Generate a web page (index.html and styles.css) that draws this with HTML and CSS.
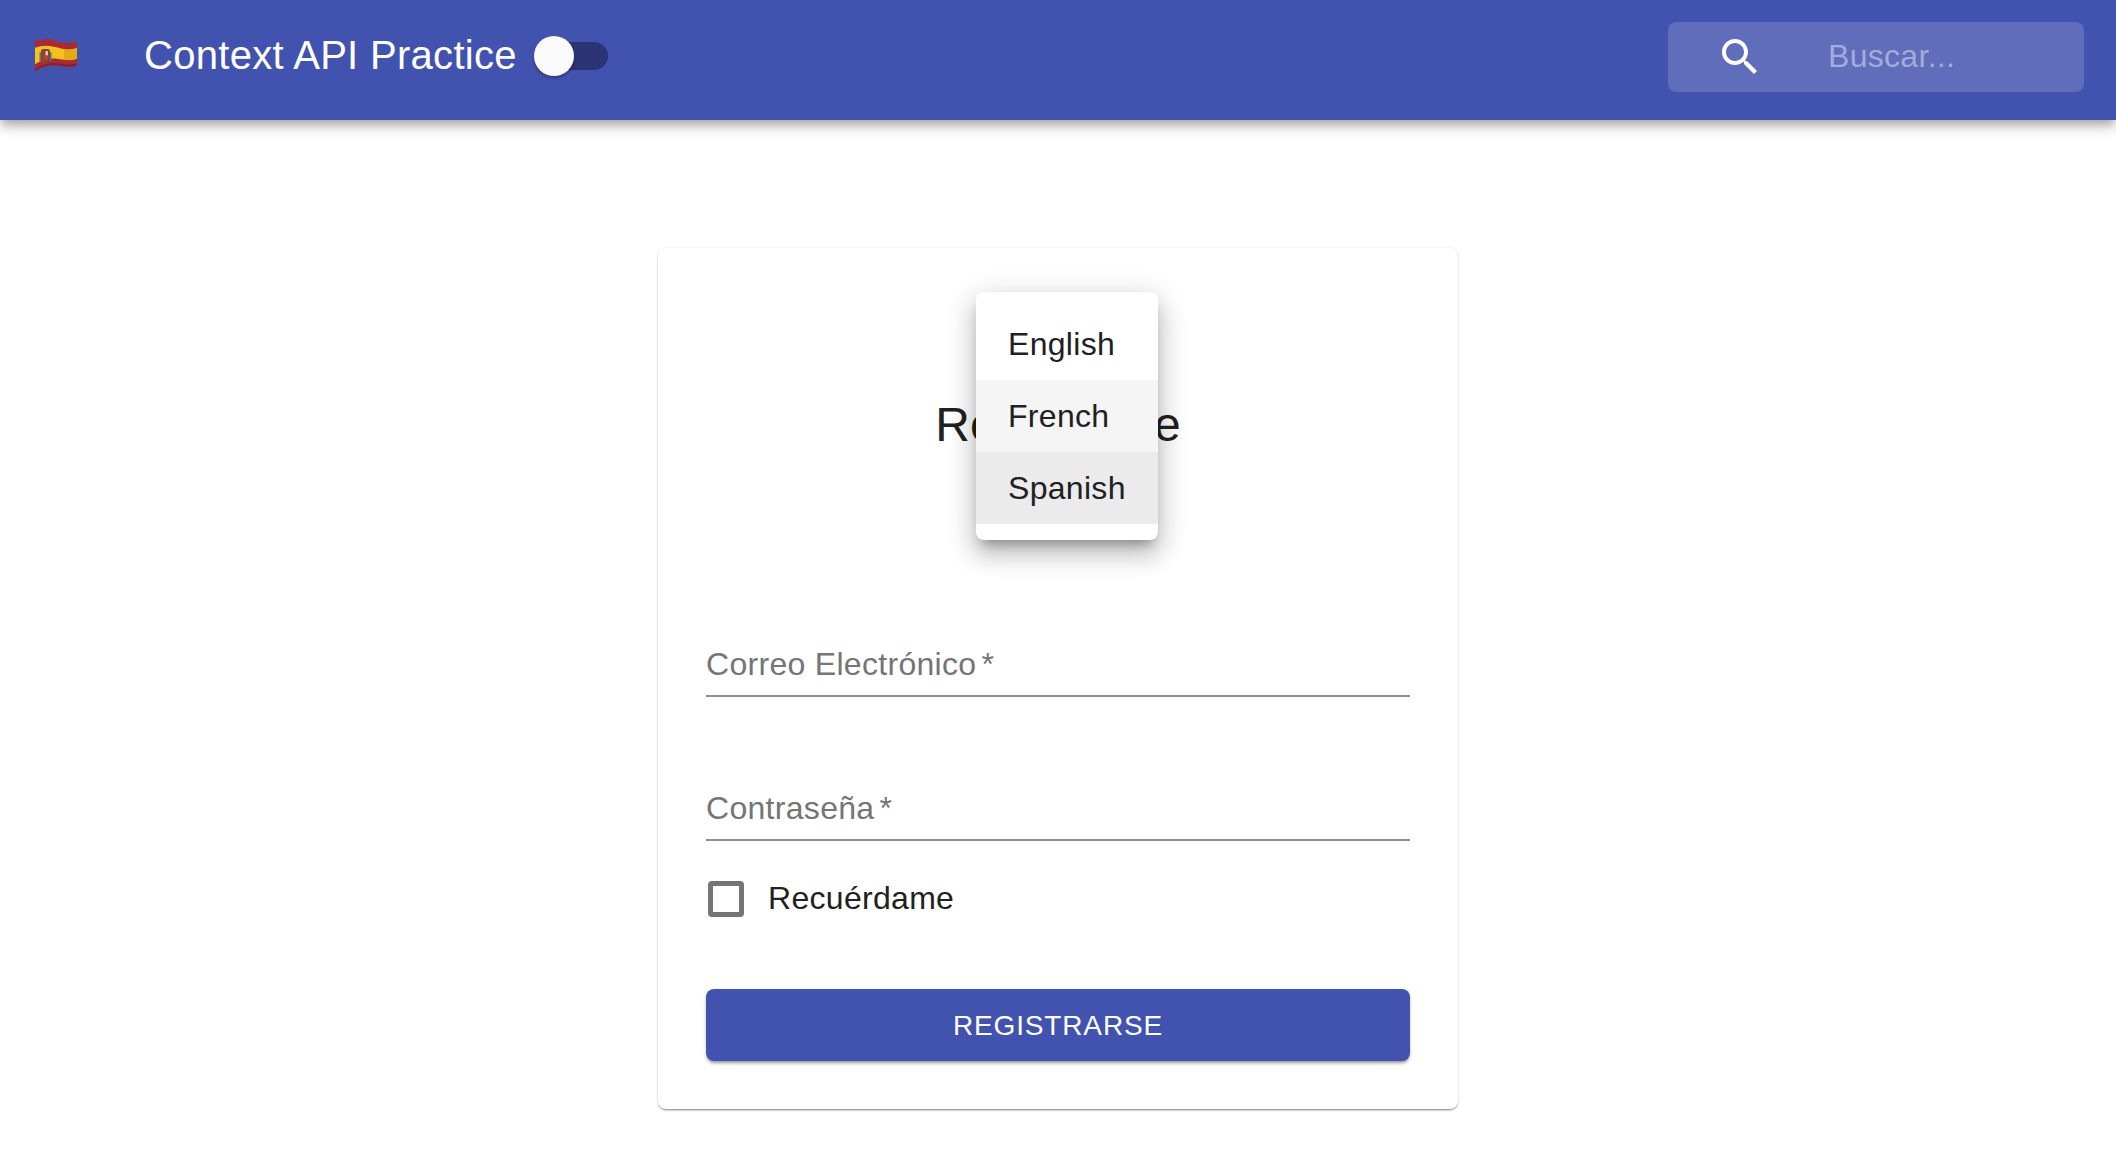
FILE: index.html
```html
<!DOCTYPE html>
<html lang="es">

<head>
    <meta charset="UTF-8">
    <meta name="viewport" content="width=device-width, initial-scale=1.0">
    <title>Context API Practice</title>
    <link rel="stylesheet" href="styles.css">
</head>

<body>

    <!-- Barra superior -->
    <header class="app-bar">
        <svg class="flag" viewBox="0 1 44 31" preserveAspectRatio="none" aria-label="Spanish flag">
            <path d="M1 4C7 2 13 1 20 3S35 7 43 4V26C35 28 30 27 23 26S8 27 1 31Z" fill="#a92a35" />
            <path d="M1 31C8 27 16 25.500 23 26S35 28 43 26V24C35 26 30 25 23 24S8 25 1 29Z" fill="#8a1f2c" />
            <path d="M1 10C7 8 13 7.500 20 9S35 13 43 10V20C35 22 30 21 23 20S8 21 1 25Z" fill="#f3c21d" />
            <path d="M30 11.500C34 12.500 38 12 43 10V20C38 21.500 34 21.500 30 20.800Z" fill="#e3ab14" />
            <rect x="7" y="11" width="9" height="12" rx="2" fill="#7d4a2b" />
            <rect x="9" y="13" width="2.500" height="4" fill="#b5303a" />
            <rect x="11.500" y="13" width="2.500" height="4" fill="#d8d2c4" />
            <rect x="9" y="17" width="5" height="4" fill="#c0392f" />
            <rect x="5.500" y="14" width="1.500" height="8" fill="#5d6f8a" />
            <rect x="16" y="14" width="1.500" height="8" fill="#5d6f8a" />
        </svg>
        <span class="app-title">Context API Practice</span>
        <div class="switch">
            <span class="switch-track"></span>
            <span class="switch-thumb"></span>
        </div>
        <div class="search">
            <svg class="search-icon" viewBox="0 0 24 24">
                <path d="M15.5 14h-.79l-.28-.27C15.41 12.59 16 11.11 16 9.5 16 5.91 13.09 3 9.5 3S3 5.91 3 9.5 5.91 16 9.5 16c1.61 0 3.09-.59 4.230-1.570l.27.28v.79l5 4.990L20.490 19l-4.990-5zm-6 0C7.010 14 5 11.990 5 9.500S7.010 5 9.500 5 14 7.010 14 9.500 11.990 14 9.500 14z" />
            </svg>
            <input class="search-input" type="text" placeholder="Buscar...">
        </div>
    </header>

    <main class="page">
        <div class="card">
            <h1 class="card-title">Registrarse</h1>

            <!-- Menú de idioma abierto -->
            <ul class="menu">
                <li class="menu-item">English</li>
                <li class="menu-item hover">French</li>
                <li class="menu-item selected">Spanish</li>
            </ul>

            <form class="form">
                <div class="field first">
                    <label class="field-label">Correo Electrónico<span class="required">*</span></label>
                </div>
                <div class="field">
                    <label class="field-label">Contraseña<span class="required">*</span></label>
                </div>
                <label class="remember">
                    <input class="remember-box" type="checkbox">
                    <span class="remember-text">Recuérdame</span>
                </label>
                <button class="submit" type="button">Registrarse</button>
            </form>
        </div>
    </main>

</body>

</html>
```

FILE: styles.css
```css
* {
    box-sizing: border-box;
}

body {
    font-family: "Liberation Sans", Arial, sans-serif;
    background-color: white;
    color: #212121;
    margin: 0;
    min-height: 100vh;
    letter-spacing: 0.3px;
}

.app-bar {
    display: flex;
    align-items: center;
    height: 120px;
    padding: 0 32px 6px 34px;
    background-color: #4252af;
    box-shadow: 0 4px 8px -2px rgba(0, 0, 0, 0.2), 0 8px 10px 0 rgba(0, 0, 0, 0.14), 0 2px 20px 0 rgba(0, 0, 0, 0.12);
    color: white;
}

.flag {
    width: 44px;
    height: 34px;
    margin-bottom: 4px;
}

.app-title {
    margin-left: 66px;
    margin-bottom: 4px;
    font-size: 40px;
    line-height: 48px;
}

.switch {
    position: relative;
    width: 74px;
    height: 40px;
    margin-left: 17px;
    margin-bottom: 2px;
}

.switch-track {
    position: absolute;
    top: 6px;
    left: 6px;
    width: 68px;
    height: 28px;
    border-radius: 14px;
    background-color: #2d3476;
}

.switch-thumb {
    position: absolute;
    top: 0;
    left: 0;
    width: 40px;
    height: 40px;
    border-radius: 50%;
    background-color: #fafafa;
    box-shadow: 0 2px 3px rgba(0, 0, 0, 0.3);
}

.search {
    display: flex;
    align-items: center;
    width: 416px;
    height: 70px;
    margin-left: auto;
    padding-left: 48px;
    border-radius: 8px;
    background-color: #5f6dbb;
}

.search-icon {
    width: 48px;
    height: 48px;
    fill: white;
}

.search-input {
    flex: 1;
    min-width: 0;
    margin-left: 64px;
    margin-bottom: 2px;
    padding: 0;
    border: none;
    outline: none;
    background: none;
    color: white;
    font-family: inherit;
    font-size: 32px;
    letter-spacing: 0.3px;
}

.search-input::placeholder {
    color: #a3abd9;
    opacity: 1;
}

.page {
    display: flex;
    justify-content: center;
    padding-top: 128px;
}

.card {
    position: relative;
    width: 800px;
    padding: 48px;
    border-radius: 8px;
    background-color: white;
    box-shadow: 0 2px 2px -1px rgba(0, 0, 0, 0.4), 0 1px 3px 0 rgba(0, 0, 0, 0.12), 0 0 2px 0 rgba(0, 0, 0, 0.08);
}

.card-title {
    margin: 97px 0 0;
    font-size: 48px;
    font-weight: normal;
    line-height: 64px;
    letter-spacing: 0;
    text-align: center;
}

.menu {
    position: absolute;
    top: 44px;
    left: 318px;
    width: 182px;
    margin: 0;
    padding: 16px 0;
    border-radius: 8px;
    background-color: white;
    box-shadow: 0 10px 12px -6px rgba(0, 0, 0, 0.3), 0 16px 24px 2px rgba(0, 0, 0, 0.14), 0 6px 30px 5px rgba(0, 0, 0, 0.12);
    list-style: none;
}

.menu-item {
    height: 72px;
    padding: 0 32px;
    font-size: 32px;
    line-height: 72px;
}

.menu-item.hover {
    background-color: #f5f5f5;
}

.menu-item.selected {
    background-color: #ebebeb;
}

.field {
    display: flex;
    align-items: flex-end;
    height: 112px;
    margin-top: 32px;
    padding-bottom: 12px;
    border-bottom: 2px solid #8e8e8e;
}

.field.first {
    margin-top: 128px;
}

.field-label {
    color: #757575;
    font-size: 32px;
    line-height: 37px;
}

.required {
    margin-left: 5px;
}

.remember {
    display: flex;
    align-items: center;
    height: 36px;
    margin-top: 40px;
    font-size: 32px;
}

.remember-box {
    appearance: none;
    width: 36px;
    height: 36px;
    margin: 0 24px 0 2px;
    border: 5px solid #757575;
    border-radius: 4px;
    background-color: white;
}

.remember-text {
    margin-bottom: 2px;
}

.submit {
    display: block;
    width: 100%;
    height: 72px;
    margin-top: 72px;
    padding-top: 2px;
    border: none;
    border-radius: 8px;
    background-color: #4252af;
    box-shadow: 0 3px 3px -1px rgba(0, 0, 0, 0.3), 0 2px 4px 0 rgba(0, 0, 0, 0.14);
    color: white;
    font-family: inherit;
    font-size: 28px;
    letter-spacing: 0.85px;
    text-transform: uppercase;
}
```
